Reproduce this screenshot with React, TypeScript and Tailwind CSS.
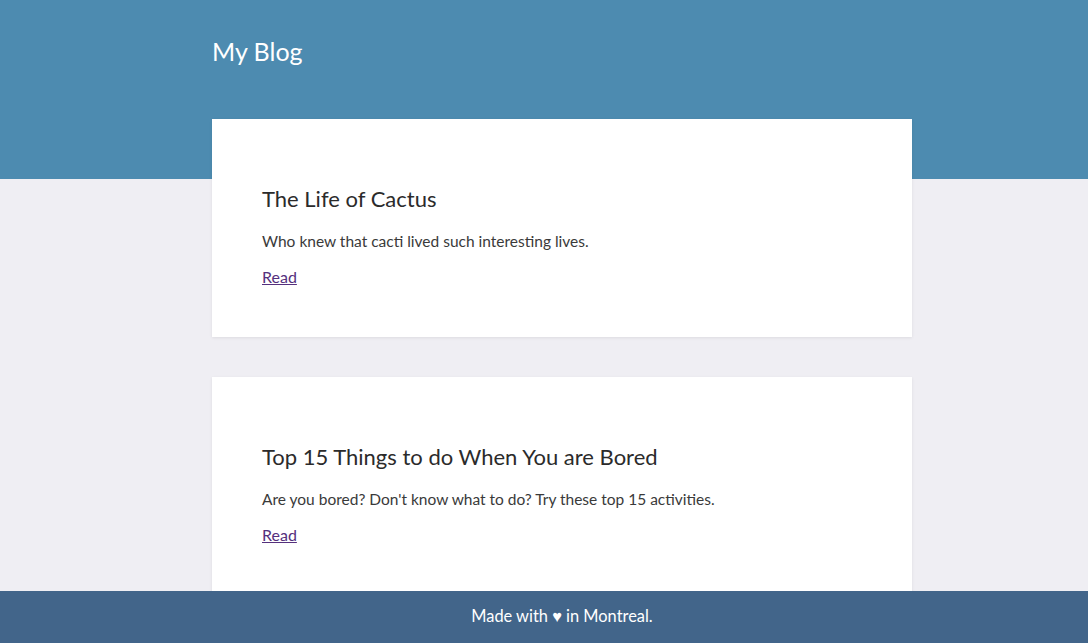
import React from "react";

const posts = [
  { title: "The Life of Cactus", excerpt: "Who knew that cacti lived such interesting lives." },
  { title: "Top 15 Things to do When You are Bored", excerpt: "Are you bored? Don't know what to do? Try these top 15 activities." },
];

export default function App() {
  return (
    <div className="min-h-screen bg-[#efeef3] font-['Lato',sans-serif] text-[#333]">
      <header className="h-[179px] bg-[#4d8bb0]">
        <div className="ml-[212px] w-[700px] pt-[36px]">
          <h1 className="text-[25px] leading-[30px] text-white">My Blog</h1>
        </div>
      </header>
      <main className="ml-[212px] -mt-[60px] flex w-[700px] flex-col gap-[40px] pb-[80px]">
        {posts.map((p) => (
          <article key={p.title} className="bg-white px-[50px] pt-[66px] pb-[48px] shadow-[0_1px_3px_rgba(0,0,0,0.08)]">
            <h2 className="text-[22px] leading-[28px] text-[#2b2b2b]">{p.title}</h2>
            <p className="mt-[18px] text-[15.5px] leading-[20px] text-[#3a3a3a]">{p.excerpt}</p>
            <a href="#" className="mt-[16px] inline-block text-[16px] leading-[20px] text-[#55307d] underline">
              Read
            </a>
          </article>
        ))}
      </main>
      <footer className="fixed bottom-0 left-0 right-0 flex h-[52px] items-center bg-[#42658a] pb-[2px] text-[16.4px] text-white">
        <div className="ml-[212px] w-[700px] text-center">Made with ♥ in Montreal.</div>
      </footer>
    </div>
  );
}
